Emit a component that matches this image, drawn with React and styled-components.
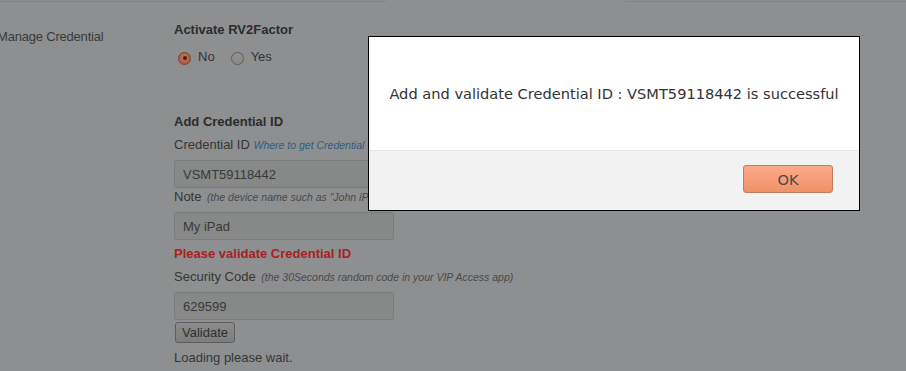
import React from "react";
import styled, { createGlobalStyle } from "styled-components";

const Global = createGlobalStyle`
  html, body { margin: 0; padding: 0; }
  body {
    background: #8e8f90;
    font-family: "Liberation Sans", Arial, sans-serif;
    font-size: 13px;
    color: #383838;
    overflow: hidden;
  }
`;

const Page = styled.div`
  width: 906px;
  height: 371px;
  position: relative;
  overflow: hidden;
`;

const TabBar = styled.div`
  display: flex;
  height: 2px;
`;

const TabSegment = styled.div`
  width: ${(p) => (p.$grow ? "auto" : `${p.$w}px`)};
  flex: ${(p) => (p.$grow ? 1 : "none")};
  border-bottom: ${(p) => (p.$active ? "none" : "1px solid #838485")};
`;

const Content = styled.div`
  display: grid;
  grid-template-columns: 174px 1fr;
`;

const SideLabel = styled.div`
  padding-top: 26px;
  margin-left: -3px;
  line-height: 18px;
  color: #3a3a3a;
  letter-spacing: -0.2px;
`;

const Form = styled.div`
  display: flex;
  flex-direction: column;
  align-items: flex-start;
  padding-top: 19px;
`;

const Heading = styled.div`
  font-weight: bold;
  line-height: 18px;
  color: #2c2c2c;
  margin-top: ${(p) => p.$mt || 0}px;
`;

const RadioRow = styled.div`
  display: flex;
  align-items: center;
  height: 18px;
  margin-top: 9px;
  padding-left: 4px;
`;

const RadioOption = styled.label`
  display: flex;
  align-items: center;
  gap: 7px;
  margin-right: 16px;
  color: #333;
  line-height: 18px;
`;

const RadioCircle = styled.span`
  width: 13px;
  height: 13px;
  border-radius: 50%;
  box-sizing: border-box;
  display: flex;
  align-items: center;
  justify-content: center;
  margin-top: 2px;
  border: 1px solid ${(p) => (p.$checked ? "#7d402a" : "#5e5e5e")};
  background: ${(p) =>
    p.$checked
      ? "radial-gradient(circle at 50% 40%, #c27558, #a2563a)"
      : "linear-gradient(#929292, #888888)"};
  &::after {
    content: "";
    display: ${(p) => (p.$checked ? "block" : "none")};
    width: 4px;
    height: 4px;
    border-radius: 50%;
    background: #4a2516;
  }
`;

const Label = styled.div`
  line-height: 18px;
  color: #363636;
  margin-top: ${(p) => p.$mt || 0}px;
  white-space: nowrap;
`;

const Hint = styled.span`
  font-style: italic;
  font-size: 10.5px;
  color: #4a4a4a;
  margin-left: 2px;
`;

const HintLink = styled.span`
  font-style: italic;
  font-size: 10.5px;
  color: #2b5f86;
`;

const Input = styled.div`
  box-sizing: border-box;
  width: 220px;
  height: 28px;
  margin-top: ${(p) => p.$mt || 0}px;
  padding: 0 8px;
  display: flex;
  align-items: center;
  background: #878888;
  border: 1px solid #7b7c7c;
  border-radius: 3px;
  color: #3a3a3a;
`;

const Error = styled.div`
  font-weight: bold;
  color: #a8201f;
  line-height: 18px;
  margin-top: 5px;
`;

const SmallButton = styled.div`
  box-sizing: border-box;
  margin-top: 2px;
  margin-left: 1px;
  height: 21px;
  padding: 0 6px;
  display: flex;
  align-items: center;
  border: 1px solid #5d5d5d;
  border-radius: 3px;
  background: linear-gradient(#8c8c8c, #7d7d7d);
  color: #2f2f2f;
`;

const Dialog = styled.div`
  position: absolute;
  left: 368px;
  top: 36px;
  width: 492px;
  height: 175px;
  box-sizing: border-box;
  border: 1px solid #000;
  background: #fff;
  display: flex;
  flex-direction: column;
  font-family: "DejaVu Sans", Verdana, sans-serif;
`;

const DialogBody = styled.div`
  height: 113px;
  display: flex;
  align-items: center;
  justify-content: center;
  font-size: 14.6px;
  color: #333;
`;

const DialogFooter = styled.div`
  flex: 1;
  background: #f2f2f2;
  border-top: 1px solid #e4e4e4;
  display: flex;
  justify-content: flex-end;
  align-items: flex-start;
  padding: 14px 26px 0 0;
`;

const OkButton = styled.div`
  box-sizing: border-box;
  width: 90px;
  height: 28px;
  display: flex;
  align-items: center;
  justify-content: center;
  border: 1px solid #c87a5c;
  border-radius: 3px;
  background: linear-gradient(#fbab8a, #f09169);
  font-size: 14.6px;
  color: #4a4a4a;
`;

export default function App() {
  return (
    <Page>
      <Global />
      <TabBar>
        <TabSegment $w={386} />
        <TabSegment $w={239} $active />
        <TabSegment $grow />
      </TabBar>
      <Content>
        <SideLabel>Manage Credential</SideLabel>
        <Form>
          <Heading>Activate RV2Factor</Heading>
          <RadioRow>
            <RadioOption>
              <RadioCircle $checked />
              No
            </RadioOption>
            <RadioOption>
              <RadioCircle />
              Yes
            </RadioOption>
          </RadioRow>
          <Heading $mt={47}>Add Credential ID</Heading>
          <Label $mt={5}>
            Credential ID <HintLink>Where to get Credential ID?</HintLink>
          </Label>
          <Input $mt={6}>VSMT59118442</Input>
          <Label>
            Note <Hint>(the device name such as "John iPad")</Hint>
          </Label>
          <Input $mt={6}>My iPad</Input>
          <Error>Please validate Credential ID</Error>
          <Label $mt={5}>
            Security Code{" "}
            <Hint>(the 30Seconds random code in your VIP Access app)</Hint>
          </Label>
          <Input $mt={6}>629599</Input>
          <SmallButton>Validate</SmallButton>
          <Label $mt={6}>Loading please wait.</Label>
        </Form>
      </Content>
      <Dialog>
        <DialogBody>
          Add and validate Credential ID : VSMT59118442 is successful
        </DialogBody>
        <DialogFooter>
          <OkButton>OK</OkButton>
        </DialogFooter>
      </Dialog>
    </Page>
  );
}
